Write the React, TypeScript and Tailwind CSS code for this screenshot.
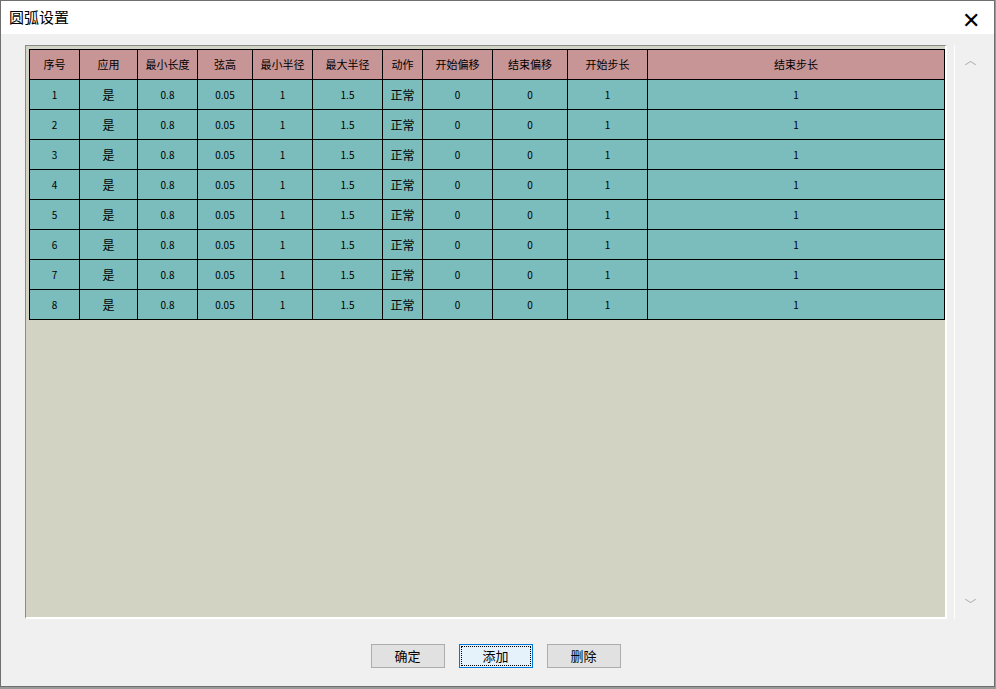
export default function App() {
  const cols = [50, 58, 60, 55, 60, 70, 40, 70, 75, 80, 297];
  const heads = ["序号", "应用", "最小长度", "弦高", "最小半径", "最大半径", "动作", "开始偏移", "结束偏移", "开始步长", "结束步长"];
  const rows = Array.from({ length: 8 }, (_, i) => [String(i + 1), "是", "0.8", "0.05", "1", "1.5", "正常", "0", "0", "1", "1"]);
  const font = { fontFamily: '"Noto Sans CJK SC", "Liberation Sans", sans-serif' };
  return (
    <div className="w-[996px] h-[689px] bg-[#9a9a9a] overflow-hidden" style={font}>
      <div className="w-[995px] h-[687px] bg-[#f0f0f0] border border-[#6f6f6f] flex flex-col">
        <div className="h-[33px] bg-white flex items-center justify-between px-[8px] shrink-0">
          <span className="text-[15px] text-black">圆弧设置</span>
          <span className="text-[22px] font-light text-black mr-[6px] leading-none">✕</span>
        </div>
        <div className="flex pt-[11px] pl-[24px]">
          <div className="w-[922px] h-[574px] bg-[#d2d3c2] border-t border-l border-[#8a8a8a] border-b-2 border-r-2 border-b-white border-r-white pt-[3px] pl-[3px]">
            <table className="border-collapse text-[11px] text-black" style={{ tableLayout: "fixed" }}>
              <colgroup>{cols.map((w, i) => <col key={i} style={{ width: w }} />)}</colgroup>
              <thead>
                <tr className="bg-[#c79596] h-[30px]">
                  {heads.map((h) => <th key={h} className="border border-black font-normal text-center">{h}</th>)}
                </tr>
              </thead>
              <tbody>
                {rows.map((r, i) => (
                  <tr key={i} className="bg-[#7abdbc] h-[30px]">
                    {r.map((c, j) => <td key={j} className={`border border-black text-center ${j === 1 || j === 6 ? "text-[12px]" : "text-[10px]"}`}>{c}</td>)}
                  </tr>
                ))}
              </tbody>
            </table>
          </div>
          <div className="ml-[7px] w-[32px] h-[574px] border-l border-white flex flex-col items-center justify-between py-[6px] text-[#b0b0b0] text-[12px]">
            <span>︿</span>
            <span>﹀</span>
          </div>
        </div>
        <div className="flex justify-center gap-[14px] mt-[25px] pr-[4px]">
          {["确定", "添加", "删除"].map((b) => (
            <div key={b} className={`w-[74px] h-[24px] flex items-center justify-center text-[13px] ${b === "添加" ? "bg-[#e5f1fb] border border-[#0078d7] outline-1 outline-dotted outline-black -outline-offset-[3px]" : "bg-[#e1e1e1] border border-[#adadad]"}`}>{b}</div>
          ))}
        </div>
      </div>
    </div>
  );
}
